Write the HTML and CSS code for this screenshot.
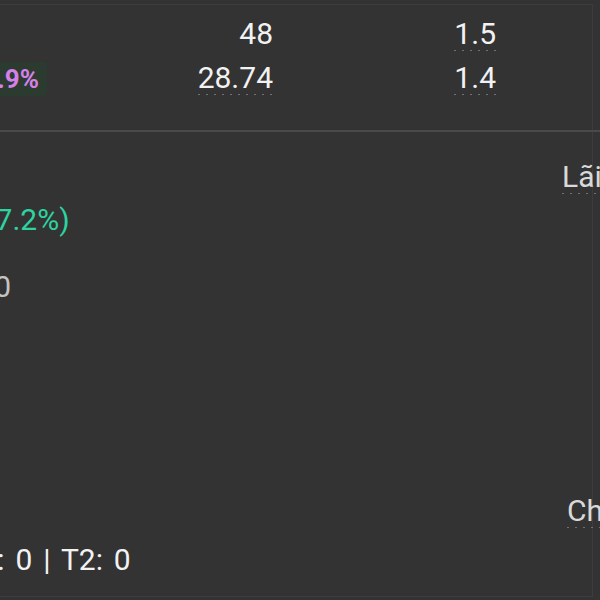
FILE: index.html
```html
<!DOCTYPE html>
<html lang="vi">
<head>
<meta charset="utf-8">
<title>Danh mục</title>
<link rel="stylesheet" href="styles.css">
</head>
<body>
<div class="card">
  <div class="stats">
    <div class="row">
      <div class="cell"></div>
      <div class="cell">48</div>
      <div class="cell"><span class="dot">1.5</span></div>
    </div>
    <div class="row">
      <div class="cell"><span class="badge">+14.9%</span></div>
      <div class="cell"><span class="dot">28.74</span></div>
      <div class="cell"><span class="dot">1.4</span></div>
    </div>
  </div>
  <div class="rule"></div>
  <div class="detail">
    <div class="left">
      <div class="line">Lãi/lỗ</div>
      <div class="line gain">+1.250.000 (7.2%)</div>
      <div class="line muted">Số lượng: 100</div>
      <div class="line foot">T0: 0 | T1: 0 | T2: 0</div>
    </div>
    <div class="right">
      <div class="line"><span class="dot label">Lãi suất</span></div>
      <div class="line second"><span class="dot label">Chi phí</span></div>
    </div>
  </div>
</div>
</body>
</html>
```
FILE: styles.css
```css
html, body {
  margin: 0;
  padding: 0;
}
body {
  background: #333333;
  font-family: Roboto, "Noto Sans", sans-serif;
  font-size: 30px;
  color: #f2f2f2;
  width: 600px;
  height: 600px;
  overflow: hidden;
}
.card {
  box-sizing: border-box;
  margin: 4px 0 0 -253px;
  width: 846px;
  height: 593px;
  border: 1px solid #3d3d3d;
}
.stats {
  display: flex;
  flex-direction: column;
  gap: 8px;
  padding: 11px 0 36px;
}
.row {
  display: grid;
  grid-template-columns: 299px 226px 223px;
  height: 35px;
  line-height: 35px;
  align-items: center;
}
.cell {
  text-align: right;
  white-space: nowrap;
}
.dot {
  display: inline-block;
  background-image: linear-gradient(to right, #707070 0 2px, transparent 2px);
  background-size: 8px 1px;
  background-repeat: repeat-x;
  background-position: 0 100%;
}
.badge {
  display: inline-block;
  height: 34px;
  line-height: 34px;
  padding: 0 8px;
  font-size: 26px;
  font-weight: 700;
  color: #d580e8;
  background: #2b3b30;
  border-radius: 4px;
  vertical-align: middle;
}
.rule {
  height: 2px;
  background: #4a4a4a;
  margin-right: -10px;
}
.detail {
  display: grid;
  grid-template-columns: 814px 1fr;
  padding-top: 27px;
}
.line {
  height: 35px;
  line-height: 35px;
  white-space: nowrap;
}
.left {
  padding-left: 79px;
  display: flex;
  flex-direction: column;
}
.left .line + .line {
  margin-top: 8px;
}
.gain {
  color: #2dd4a0;
}
.left .line.muted {
  margin-top: 32px;
  color: #c4c4c4;
}
.left .line.foot {
  margin-top: 238px;
  margin-left: 37px;
  word-spacing: 3.5px;
  color: #f2f2f2;
}
.label {
  color: #d9d9d9;
}
.right .second {
  margin-top: 299px;
  padding-left: 5px;
}
```
